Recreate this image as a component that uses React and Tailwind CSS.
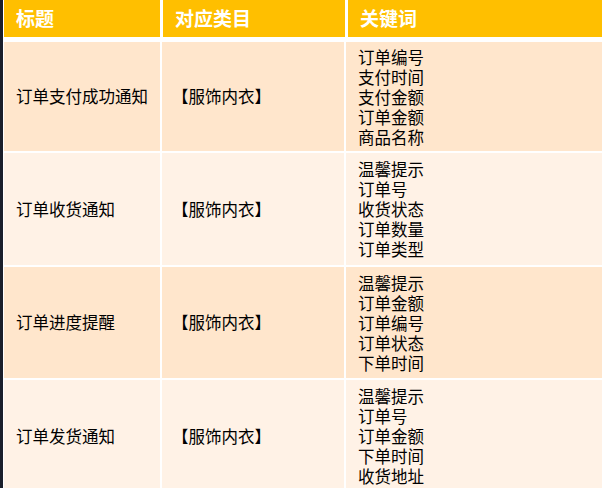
import React from 'react';

const rows = [
  { title: '订单支付成功通知', cat: '【服饰内衣】', keys: ['订单编号', '支付时间', '支付金额', '订单金额', '商品名称'], h: 'h-[109px]', bg: 'bg-[#ffe6cc]' },
  { title: '订单收货通知', cat: '【服饰内衣】', keys: ['温馨提示', '订单号', '收货状态', '订单数量', '订单类型'], h: 'h-[112px]', bg: 'bg-[#fff2e6]' },
  { title: '订单进度提醒', cat: '【服饰内衣】', keys: ['温馨提示', '订单金额', '订单编号', '订单状态', '下单时间'], h: 'h-[111px]', bg: 'bg-[#ffe6cc]' },
  { title: '订单发货通知', cat: '【服饰内衣】', keys: ['温馨提示', '订单号', '订单金额', '下单时间', '收货地址'], h: 'h-[112px]', bg: 'bg-[#fff2e6]' },
];

const App = () => {
  return (
    <div className="w-[604px] h-[488px] overflow-hidden bg-[#1b1f2b] pl-[3px] font-['Noto_Sans_CJK_SC',sans-serif]">
      <div className="h-full bg-white pl-px pr-[2px]">
        {/* Header */}
        <div className="grid grid-cols-[156px_182px_1fr] gap-x-[3px] h-[37px] mb-[5px]">
          <div className="bg-[#ffbf00] flex items-center pl-[12px] text-white font-bold text-[19px]">标题</div>
          <div className="bg-[#ffbf00] flex items-center pl-[12px] text-white font-bold text-[19px]">对应类目</div>
          <div className="bg-[#ffbf00] flex items-center pl-[12px] text-white font-bold text-[19px]">关键词</div>
        </div>

        {/* Rows */}
        <div className="flex flex-col gap-y-[2px]">
          {rows.map((row, i) => (
            <div key={i} className={`grid grid-cols-[156px_182px_1fr] gap-x-[2px] ${row.h}`}>
              <div className={`${row.bg} flex items-center pl-[12px] text-[16.5px] text-black`}>{row.title}</div>
              <div className={`${row.bg} flex items-center pl-[10px] text-[16.5px] text-black`}>{row.cat}</div>
              <div className={`${row.bg} flex flex-col justify-center pl-[12px] text-[16.5px] leading-[20px] text-black`}>
                {row.keys.map((k) => (
                  <span key={k}>{k}</span>
                ))}
              </div>
            </div>
          ))}
        </div>
      </div>
    </div>
  );
};

export default App;
